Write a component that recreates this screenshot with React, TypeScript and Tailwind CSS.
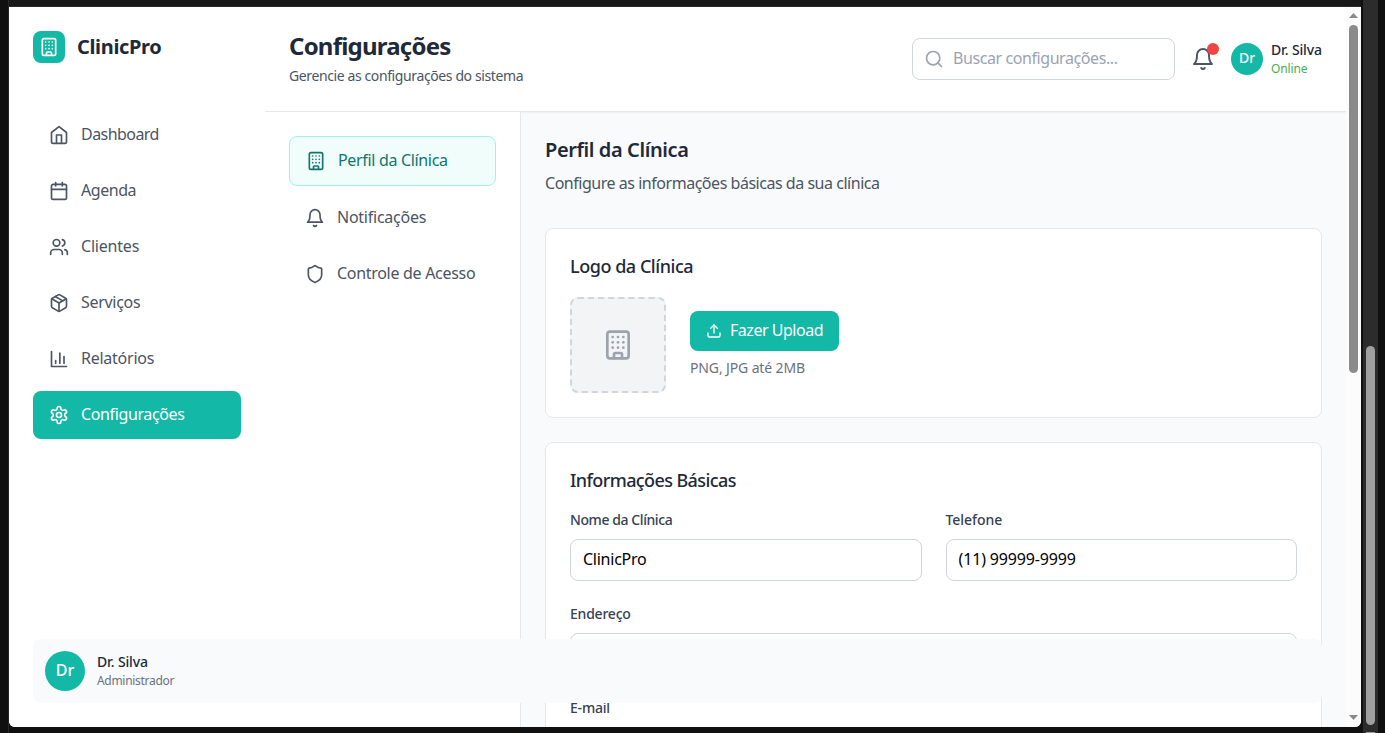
import React from "react";
import { Building, Calendar, Package, Search, Shield, Upload, Users } from "lucide-react";

type IconProps = { size?: number; className?: string };

function Icon24({ size = 20, className = "", children }: IconProps & { children: React.ReactNode }) {
  return (
    <svg width={size} height={size} viewBox="0 0 24 24" fill="none" stroke="currentColor" strokeWidth={2} strokeLinecap="round" strokeLinejoin="round" className={className}>
      {children}
    </svg>
  );
}

function BarChart(props: IconProps) {
  return (
    <Icon24 {...props}>
      <path d="M3 3v18h18" />
      <path d="M18 17V9" />
      <path d="M13 17V5" />
      <path d="M8 17v-3" />
    </Icon24>
  );
}

function Home(props: IconProps) {
  return (
    <Icon24 {...props}>
      <path d="m3 9 9-7 9 7v11a2 2 0 0 1-2 2H5a2 2 0 0 1-2-2z" />
      <path d="M9 22V12h6v10" />
    </Icon24>
  );
}

function Bell(props: IconProps) {
  return (
    <Icon24 {...props}>
      <path d="M6 8a6 6 0 0 1 12 0c0 7 3 9 3 9H3s3-2 3-9" />
      <path d="M10.3 21a1.94 1.94 0 0 0 3.4 0" />
    </Icon24>
  );
}

function Gear(props: IconProps) {
  return (
    <Icon24 {...props}>
      <path d="M12.22 2h-.44a2 2 0 0 0-2 2v.18a2 2 0 0 1-1 1.73l-.43.25a2 2 0 0 1-2 0l-.15-.08a2 2 0 0 0-2.73.73l-.22.38a2 2 0 0 0 .73 2.73l.15.1a2 2 0 0 1 1 1.72v.51a2 2 0 0 1-1 1.74l-.15.09a2 2 0 0 0-.73 2.73l.22.38a2 2 0 0 0 2.73.73l.15-.08a2 2 0 0 1 2 0l.43.25a2 2 0 0 1 1 1.73V20a2 2 0 0 0 2 2h.44a2 2 0 0 0 2-2v-.18a2 2 0 0 1 1-1.73l.43-.25a2 2 0 0 1 2 0l.15.08a2 2 0 0 0 2.73-.73l.22-.39a2 2 0 0 0-.73-2.73l-.15-.08a2 2 0 0 1-1-1.74v-.5a2 2 0 0 1 1-1.74l.15-.09a2 2 0 0 0 .73-2.73l-.22-.38a2 2 0 0 0-2.73-.73l-.15.08a2 2 0 0 1-2 0l-.43-.25a2 2 0 0 1-1-1.73V4a2 2 0 0 0-2-2z" />
      <circle cx="12" cy="12" r="3" />
    </Icon24>
  );
}

const navItems = [
  { label: "Dashboard", icon: Home, tracking: "tracking-[-0.55px]" },
  { label: "Agenda", icon: Calendar, tracking: "tracking-[-0.45px]" },
  { label: "Clientes", icon: Users, tracking: "tracking-[-0.2px]" },
  { label: "Serviços", icon: Package, tracking: "tracking-[-0.3px]" },
  { label: "Relatórios", icon: BarChart, tracking: "tracking-[-0.25px]" },
  { label: "Configurações", icon: Gear, tracking: "tracking-[-0.37px]", active: true },
];

const sections = [
  { label: "Perfil da Clínica", icon: Building, tracking: "tracking-[-0.33px]", active: true },
  { label: "Notificações", icon: Bell, tracking: "tracking-[-0.25px]" },
  { label: "Controle de Acesso", icon: Shield, tracking: "tracking-[-0.3px]" },
];

function Sidebar() {
  return (
    <aside className="z-10 flex w-64 shrink-0 flex-col gap-12 bg-white p-6">
      <div className="flex h-8 items-center gap-3">
        <div className="flex h-8 w-8 items-center justify-center rounded-lg bg-[#14b8a6] text-white">
          <Building size={20} />
        </div>
        <span className="text-xl font-bold tracking-[-0.35px] text-gray-800">ClinicPro</span>
      </div>
      <nav className="flex flex-col gap-2">
        {navItems.map(({ label, icon: Icon, tracking, active }) => (
          <a key={label} className={`flex h-12 items-center gap-3 whitespace-nowrap rounded-lg px-4 ${active ? "bg-[#14b8a6] text-white" : "text-[#4b5563]"}`}>
            <Icon size={20} className="shrink-0" />
            <span className={`-mt-0.5 ${tracking}`}>{label}</span>
          </a>
        ))}
      </nav>
    </aside>
  );
}

function Header() {
  return (
    <header className="flex h-[105px] shrink-0 items-center justify-between border-b border-gray-200 bg-white px-6 shadow-xs">
      <div className="-mt-0.5 flex flex-col gap-1 whitespace-nowrap">
        <h1 className="text-2xl font-bold tracking-[-0.78px] text-gray-800">Configurações</h1>
        <p className="text-sm tracking-[-0.39px] text-[#4b5563]">Gerencie as configurações do sistema</p>
      </div>
      <div className="flex items-center">
        <div className="flex h-[42px] w-[263px] items-center gap-[9px] rounded-lg border border-gray-300 pl-[11px] text-[#9ca3af]">
          <Search size={20} />
          <span className="-mt-0.5 tracking-[-0.42px]">Buscar configurações...</span>
        </div>
        <div className="relative ml-4 h-6 w-6 text-[#4b5563]">
          <Bell size={24} />
          <span className="absolute -right-1 -top-1 h-3 w-3 rounded-full bg-[#ef4444]" />
        </div>
        <div className="ml-4 flex h-8 w-8 items-center justify-center rounded-full bg-[#14b8a6] pb-0.5 text-sm font-medium text-white">Dr</div>
        <div className="ml-2 flex w-[51px] flex-col whitespace-nowrap">
          <span className="-mt-px mb-px text-sm font-medium tracking-[-0.12px] text-gray-800">Dr. Silva</span>
          <span className="text-xs tracking-[-0.15px] text-[#4caf50]">Online</span>
        </div>
      </div>
    </header>
  );
}

type FieldProps = { label: string; value?: string; labelTracking?: string; valueTracking?: string };

function Field({ label, value = "", labelTracking = "", valueTracking = "" }: FieldProps) {
  return (
    <label className="flex min-w-0 flex-1 flex-col gap-2">
      <span className={`-mt-px mb-px text-sm font-medium text-gray-700 ${labelTracking}`}>{label}</span>
      <span className={`flex h-[42px] items-center rounded-lg border border-gray-300 bg-white px-3 pb-0.5 text-black ${valueTracking}`}>{value}</span>
    </label>
  );
}

export default function App() {
  return (
    <div className="relative flex h-[733px] w-[1385px] overflow-hidden bg-[#101010] font-['Noto_Sans','Open_Sans',sans-serif] text-base">
      <div className="w-[9px] shrink-0 border-r border-[#272727]" />
      <div className="flex w-[1352px] shrink-0 flex-col">
        <div className="h-[7px] shrink-0 border-b border-[#292929] bg-[#181818]" />
        <div className="flex h-[720px] overflow-hidden rounded-b-md bg-white">
          <Sidebar />
          <div className="flex min-w-0 flex-1 flex-col bg-gray-50">
            <Header />
            <div className="flex min-h-0 flex-1">
              <nav className="flex w-64 shrink-0 flex-col gap-2 border-r border-gray-200 bg-white p-6">
                {sections.map(({ label, icon: Icon, tracking, active }) => (
                  <a key={label} className={`flex shrink-0 items-center gap-3 whitespace-nowrap rounded-lg px-4 ${active ? "h-[50px] border border-[#99f6e4] bg-[#f0fdfa] text-[#0f766e]" : "h-12 text-[#4b5563]"}`}>
                    <Icon size={20} className="shrink-0" />
                    <span className={`-mt-0.5 ${tracking}`}>{label}</span>
                  </a>
                ))}
              </nav>
              <main className="flex min-w-0 flex-1 flex-col overflow-hidden p-6">
                <h2 className="text-xl font-semibold tracking-[-0.4px] text-gray-800">Perfil da Clínica</h2>
                <p className="mb-px mt-[7px] tracking-[-0.47px] text-[#4b5563]">Configure as informações básicas da sua clínica</p>
                <section className="mt-8 flex shrink-0 flex-col rounded-lg border border-gray-200 bg-white p-6">
                  <h3 className="-mt-px mb-px text-lg font-medium tracking-[-0.46px] text-gray-800">Logo da Clínica</h3>
                  <div className="mt-4 flex items-center gap-6">
                    <div className="flex h-24 w-24 items-center justify-center rounded-lg border-2 border-dashed border-gray-300 bg-gray-100 text-[#9ca3af]">
                      <Building size={32} />
                    </div>
                    <div className="flex flex-col gap-2">
                      <button className="flex h-10 w-[149px] items-center gap-2 whitespace-nowrap rounded-lg bg-[#14b8a6] px-4 text-white">
                        <Upload size={16} className="shrink-0" />
                        <span className="-mt-0.5 tracking-[-0.47px]">Fazer Upload</span>
                      </button>
                      <p className="-mt-px mb-px text-sm tracking-[-0.13px] text-gray-500">PNG, JPG até 2MB</p>
                    </div>
                  </div>
                </section>
                <section className="mt-6 flex shrink-0 flex-col rounded-lg border border-gray-200 bg-white p-6">
                  <h3 className="-mt-px mb-px text-lg font-medium tracking-[-0.6px] text-gray-800">Informações Básicas</h3>
                  <div className="mt-4 flex flex-col gap-6">
                    <div className="flex gap-6">
                      <Field label="Nome da Clínica" value="ClinicPro" labelTracking="tracking-[-0.42px]" valueTracking="tracking-[-0.25px]" />
                      <Field label="Telefone" value="(11) 99999-9999" labelTracking="tracking-[-0.05px]" valueTracking="tracking-[-0.15px]" />
                    </div>
                    <Field label="Endereço" labelTracking="tracking-[-0.22px]" />
                    <Field label="E-mail" labelTracking="tracking-[-0.2px]" />
                  </div>
                </section>
              </main>
            </div>
          </div>
          <div className="z-10 flex w-[15px] shrink-0 flex-col items-center bg-[#fcfcfc]">
            <svg width="15" height="18" viewBox="0 0 15 18" fill="#8b8b8b"><path d="M3 11h9L7.500 6z" /></svg>
            <div className="h-[348px] w-[9px] rounded-full bg-[#8b8b8b]" />
            <svg className="mt-auto" width="15" height="18" viewBox="0 0 15 18" fill="#8b8b8b"><path d="M3 6h9L7.500 11z" /></svg>
          </div>
        </div>
      </div>
      <div className="w-[2px] shrink-0 bg-[#101010]" />
      <div className="flex w-[15px] shrink-0 flex-col items-center bg-[#2c2c2c] pt-[346px]">
        <div className="h-[379px] w-[9px] shrink-0 rounded-full bg-[#9f9f9f]" />
        <div className="mt-[7px] h-px w-[9px] shrink-0 bg-[#9f9f9f]" />
      </div>
      <div className="absolute left-[33px] top-[639px] z-20 flex h-16 w-[1289px] items-center gap-3 rounded-lg bg-gray-50 px-3">
        <div className="flex h-10 w-10 items-center justify-center rounded-full bg-[#14b8a6] pb-0.5 font-medium text-white">Dr</div>
        <div className="flex flex-col">
          <span className="-mt-px mb-px text-sm font-medium tracking-[-0.12px] text-gray-800">Dr. Silva</span>
          <span className="text-xs tracking-[-0.3px] text-gray-500">Administrador</span>
        </div>
      </div>
    </div>
  );
}
